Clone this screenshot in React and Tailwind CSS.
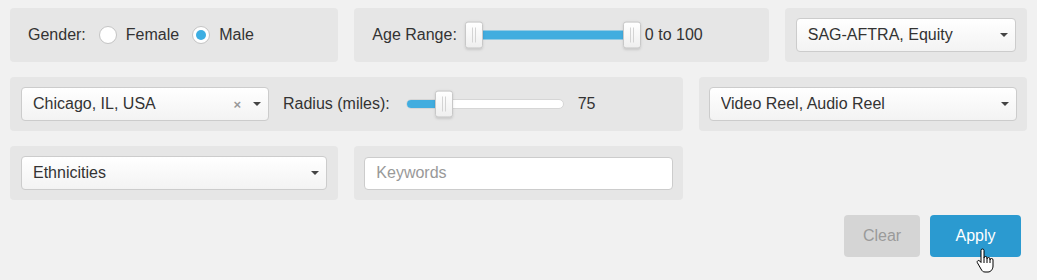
import React from "react";

const font = { fontFamily: '"Liberation Sans", Arial, sans-serif' };

function Caret() {
  return <span className="inline-block w-0 h-0 border-x-[4px] border-x-transparent border-t-[4px] border-t-[#444]" />;
}

function Select({ value, clearable }) {
  return (
    <div className="h-[34px] w-full flex items-center border border-[#cccccc] rounded bg-gradient-to-b from-white to-[#f3f3f3] pl-[11px] pr-[7px] text-[16px] text-[#333]">
      <span className="flex-1 truncate">{value}</span>
      {clearable && <span className="text-[#999] text-[13px] font-bold mr-[12px] leading-none">×</span>}
      <Caret />
    </div>
  );
}

function Handle({ left }) {
  return (
    <div
      className="absolute top-1/2 -translate-y-1/2 w-[18px] h-[27px] rounded-[3px] border border-[#c8c8c8] bg-gradient-to-b from-white to-[#efefef] shadow-sm flex items-center justify-center gap-[2px]"
      style={{ left }}
    >
      <span className="w-px h-[15px] bg-[#d4d4d4]" />
      <span className="w-px h-[15px] bg-[#d4d4d4]" />
    </div>
  );
}

function Radio({ checked, label }) {
  return (
    <label className="flex items-center gap-[9px]">
      <span className="w-[18px] h-[18px] rounded-full bg-white border border-[#c4c4c4] flex items-center justify-center">
        {checked && <span className="w-[10px] h-[10px] rounded-full bg-[#3daee2]" />}
      </span>
      <span>{label}</span>
    </label>
  );
}

export default function App() {
  return (
    <div className="relative w-[1037px] h-[280px] bg-[#f1f1f1] px-[10px] pt-[8px] text-[16px] text-[#333]" style={font}>
      <div className="grid grid-cols-12 gap-x-4 gap-y-[15px]">
        {/* Row 1 */}
        <div className="col-span-4 h-[54px] rounded bg-[#e6e6e6] flex items-center px-[18px] gap-[13px]">
          <span>Gender:</span>
          <Radio label="Female" />
          <Radio checked label="Male" />
        </div>
        <div className="col-span-5 h-[54px] rounded bg-[#e6e6e6] flex items-center px-[18px]">
          <span className="mr-[8px]">Age Range:</span>
          <div className="relative w-[176px] h-[27px]">
            <div className="absolute left-[9px] right-[9px] top-1/2 -translate-y-1/2 h-[9px] bg-[#42addf]" />
            <Handle left={0} />
            <Handle left={158} />
          </div>
          <span className="ml-[4px]">0 to 100</span>
        </div>
        <div className="col-span-3 h-[54px] rounded bg-[#e6e6e6] flex items-center px-[11px]">
          <Select value="SAG-AFTRA, Equity" />
        </div>

        {/* Row 2 */}
        <div className="col-span-8 h-[54px] rounded bg-[#e6e6e6] flex items-center px-[11px]">
          <div className="w-[248px]">
            <Select value="Chicago, IL, USA" clearable />
          </div>
          <span className="ml-[14px] mr-[16px]">Radius (miles):</span>
          <div className="relative w-[158px] h-[27px]">
            <div className="absolute inset-x-0 top-1/2 -translate-y-1/2 h-[10px] rounded-full bg-white border border-[#d6d6d6] overflow-hidden">
              <div className="h-full w-[34px] bg-[#42addf]" />
            </div>
            <Handle left={29} />
          </div>
          <span className="ml-[14px]">75</span>
        </div>
        <div className="col-span-4 h-[54px] rounded bg-[#e6e6e6] flex items-center px-[10px]">
          <Select value="Video Reel, Audio Reel" />
        </div>

        {/* Row 3 */}
        <div className="col-span-4 h-[54px] rounded bg-[#e6e6e6] flex items-center px-[11px]">
          <Select value="Ethnicities" />
        </div>
        <div className="col-span-4 h-[54px] rounded bg-[#e6e6e6] flex items-center px-[10px]">
          <input
            placeholder="Keywords"
            className="h-[33px] w-full rounded border border-[#cccccc] bg-white px-[11px] text-[16px] text-[#333] placeholder:text-[#999] outline-none"
            style={font}
          />
        </div>
      </div>

      <div className="flex justify-end gap-[10px] mt-[15px] mr-[6px]">
        <button className="w-[76px] h-[42px] rounded bg-[#d5d5d5] text-[#9a9a9a] text-[16px]" style={font}>
          Clear
        </button>
        <button className="w-[91px] h-[42px] rounded bg-[#2b9ad0] text-white text-[16px]" style={font}>
          Apply
        </button>
      </div>

      {/* mouse cursor */}
      <svg className="absolute left-[976px] top-[248px]" width="18" height="26" viewBox="0 0 18 26">
        <path
          d="M5 2.5a1.5 1.5 0 0 1 3 0V10a1.5 1.5 0 0 1 3 0v1a1.5 1.5 0 0 1 3 0v1a1.5 1.5 0 0 1 3 0v6c0 3-2 6-5 6H9c-2 0-3-1-4-3L1.3 14.6a1.5 1.5 0 0 1 2.4-1.7L5 14.5Z"
          fill="white"
          stroke="black"
          strokeWidth="1"
          strokeLinejoin="round"
        />
        <path d="M8 10v5M11 11v4M14 12v3" stroke="black" strokeWidth="1" />
      </svg>
    </div>
  );
}
